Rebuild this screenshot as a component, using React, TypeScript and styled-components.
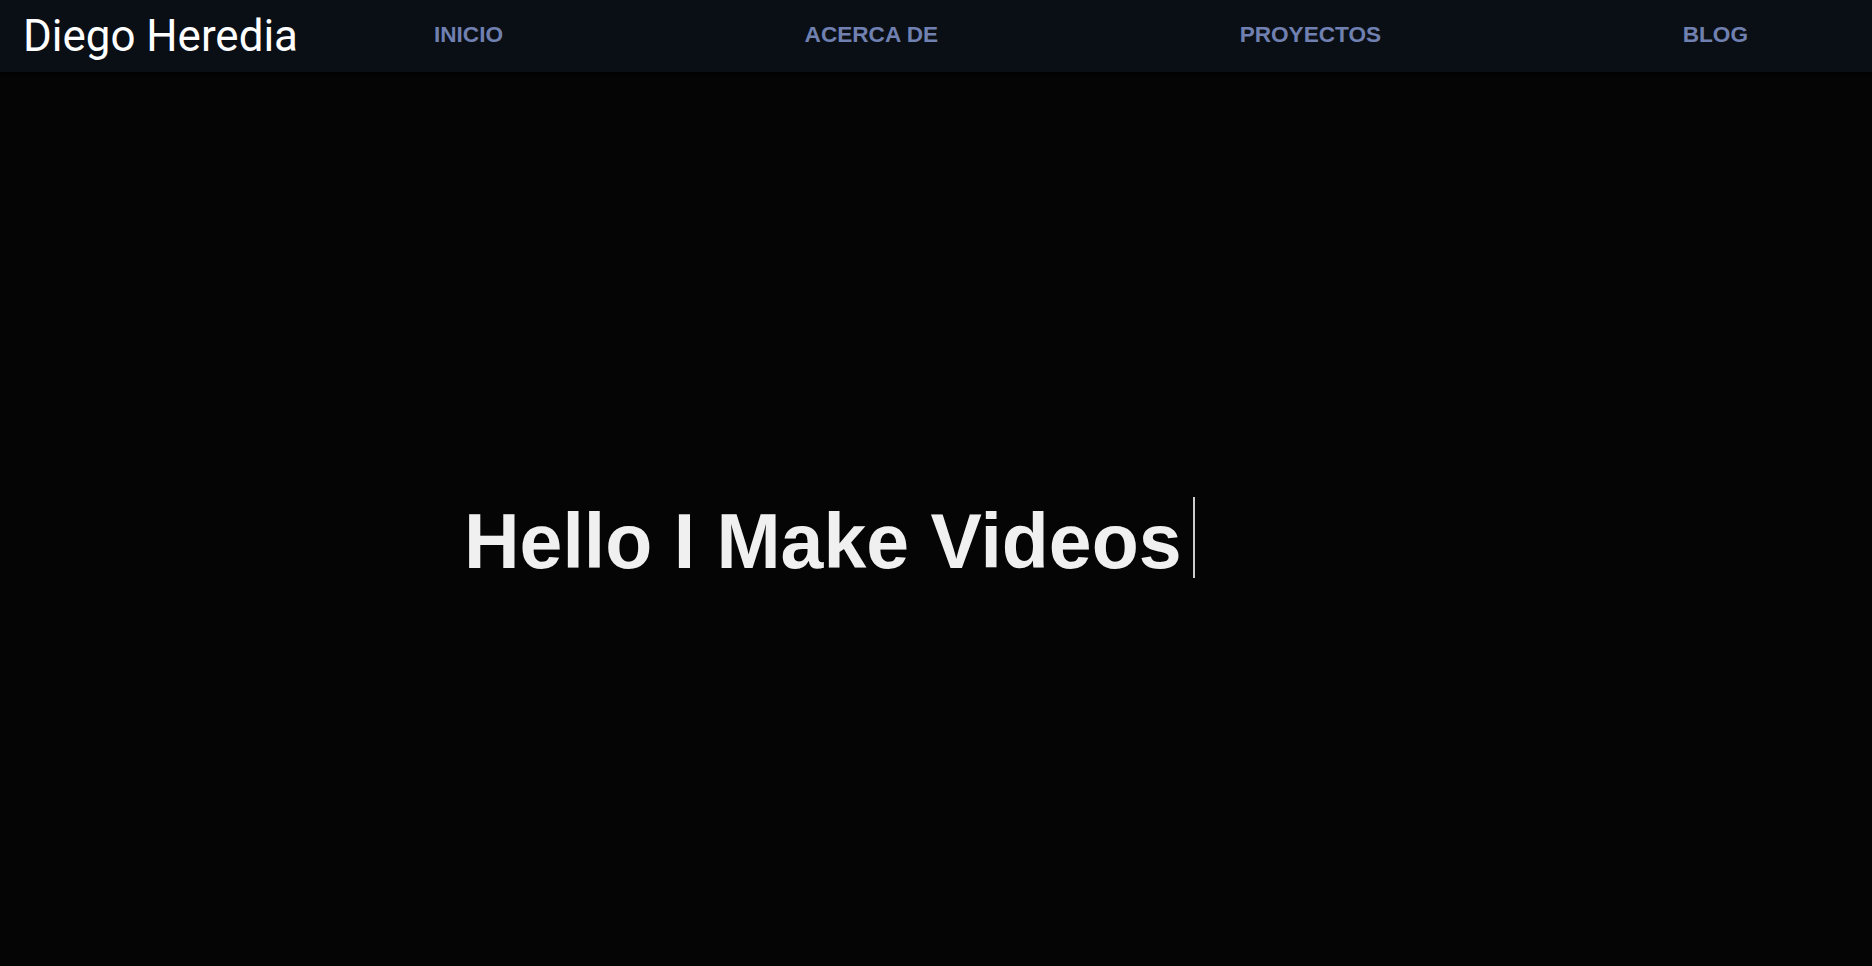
import styled, { createGlobalStyle, keyframes } from "styled-components"

const links = ["INICIO", "ACERCA DE", "PROYECTOS", "BLOG"]

const App = () => {
  return (
    <>
      <GlobalStyle />
      <StyledHeader>
        <StyledLogo>Diego Heredia</StyledLogo>
        <StyledNav>
          {links.map((link) => (
            <StyledLink key={link} href="#">
              {link}
            </StyledLink>
          ))}
        </StyledNav>
      </StyledHeader>
      <StyledHero>
        <StyledTitle>
          Hello I Make Videos
          <StyledCursor />
        </StyledTitle>
      </StyledHero>
    </>
  )
}

export default App

const GlobalStyle = createGlobalStyle`
  html, body {
    margin: 0;
    padding: 0;
    background-color: #050505;
    overflow: hidden;
  }
  * {
    box-sizing: border-box;
  }
`

const blink = keyframes`
  0%, 49% { opacity: 1; }
  50%, 100% { opacity: 0; }
`

const StyledHeader = styled.header`
  display: flex;
  flex-direction: row;
  align-items: center;
  height: 72px;
  padding-left: 23px;
  background-color: #0a0f16;
  box-shadow: 0 2px 3px rgba(0, 0, 0, 0.6);
`

const StyledLogo = styled.h1`
  margin: 0;
  font-family: Roboto, "Liberation Sans", sans-serif;
  font-size: 43.9px;
  font-weight: 400;
  color: #ffffff;
  white-space: nowrap;
`

const StyledNav = styled.nav`
  flex: 1;
  display: flex;
  flex-direction: row;
  justify-content: space-between;
  padding-left: 136px;
  padding-right: 124px;
  margin-top: -2px;
`

const StyledLink = styled.a`
  font-family: "Liberation Sans", Arial, sans-serif;
  font-size: 22.6px;
  font-weight: 700;
  color: #7080b0;
  text-decoration: none;
`

const StyledHero = styled.main`
  display: flex;
  align-items: center;
  height: 938px;
  padding-left: 464px;
`

const StyledTitle = styled.h2`
  display: flex;
  align-items: flex-start;
  margin: 0;
  font-family: "Liberation Sans", Arial, sans-serif;
  font-size: 77px;
  font-weight: 700;
  color: #f0f0f0;
  white-space: nowrap;
`

const StyledCursor = styled.span`
  display: inline-block;
  width: 2px;
  height: 81px;
  margin-left: 11px;
  background-color: #cccccc;
  animation: ${blink} 1s step-end infinite;
  animation-play-state: paused;
`
